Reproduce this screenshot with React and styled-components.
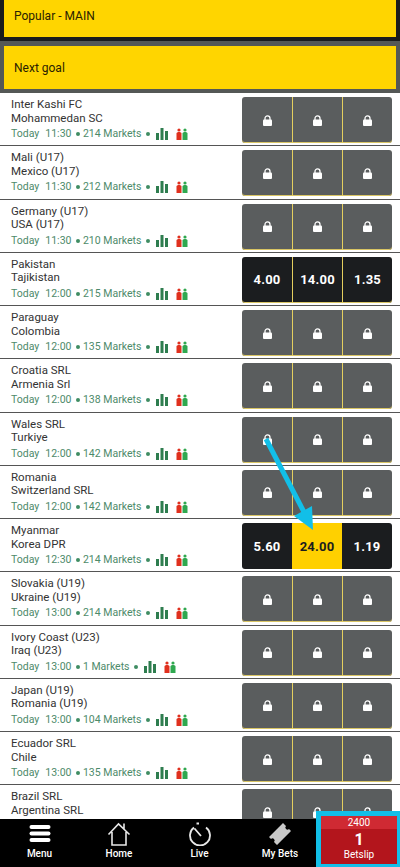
import React from "react";
import styled, { createGlobalStyle } from "styled-components";

const GlobalStyle = createGlobalStyle`
   html, body {
      margin: 0;
      padding: 0;
      background: #fff;
      font-family: Roboto, "Liberation Sans", sans-serif;
      overflow: hidden;
   }
`;

const Page = styled.div`
   position: relative;
   width: 400px;
   height: 867px;
   overflow: hidden;
`;

const TopPanel = styled.div`
   background: #1a1c1c;
   padding: 0 4px 4px;
`;

const MarketPanel = styled.div`
   background: #545856;
   padding: 5px 4px 4px;
`;

const Banner = styled.div`
   display: flex;
   align-items: center;
   box-sizing: border-box;
   height: ${(p) => p.$height}px;
   padding: 0 0 ${(p) => p.$lift || 0}px 10px;
   background: #ffd500;
   color: #2a2200;
   font-size: 12px;
`;

const Row = styled.div`
   display: flex;
   box-sizing: border-box;
   height: 53.25px;
   padding: 4px 8px 0 11px;
   background: #fff;
   border-bottom: 1px solid #555;
`;

const Info = styled.div`
   flex: 1;
   min-width: 0;
   padding-top: 1px;
`;

const Team = styled.div`
   font-size: 11.5px;
   line-height: 13.5px;
   color: #333;
`;

const Meta = styled.div`
   display: flex;
   align-items: center;
   margin-top: 2px;
   font-size: 10.5px;
   line-height: 14px;
   color: #4d8a6a;
   white-space: nowrap;
`;

const Time = styled.span`
   margin-left: 6px;
`;

const Dot = styled.span`
   width: 4px;
   height: 4px;
   margin: 0 3px 0 4.5px;
   border-radius: 50%;
   background: #3f8d63;
`;

const IconSlot = styled.svg`
   width: 12px;
   height: 12px;
   margin-left: ${(p) => p.$gap}px;
`;

const Odds = styled.div`
   display: flex;
   flex: none;
   width: 150px;
   height: 46px;
   border-radius: 3px;
   overflow: hidden;
   background: ${(p) => (p.$open ? "#1b1d1f" : "#5a5d5e")};
   box-shadow: ${(p) => (p.$plain ? "none" : "inset 0 -1px 0 #d9c564")};
`;

const Cell = styled.div`
   display: flex;
   align-items: center;
   justify-content: center;
   width: ${(p) => p.$width}px;
   box-sizing: border-box;
   font-size: 13px;
   font-weight: 700;
   letter-spacing: 0.2px;
   color: ${(p) => (p.$selected ? "#1b1d1f" : "#fff")};
   background: ${(p) => (p.$selected ? "#ffd000" : "transparent")};
   border-left: ${(p) => (p.$line ? "1px solid #e4cf5f" : "none")};
`;

const LockIcon = styled.svg`
   width: 9px;
   height: 11px;
`;

const Footer = styled.div`
   position: absolute;
   left: 0;
   right: 0;
   bottom: 0;
   display: flex;
   height: 48px;
   background: #000;
`;

const NavItem = styled.div`
   display: flex;
   flex-direction: column;
   align-items: center;
   justify-content: flex-end;
   width: ${(p) => p.$width}px;
   padding-bottom: 8px;
   box-sizing: border-box;
   color: #fff;
   font-size: 10px;
   font-weight: 500;
   line-height: 11px;
`;

const NavIcon = styled.svg`
   width: 24px;
   height: 24px;
   margin-bottom: 2px;
`;

const Betslip = styled.div`
   position: absolute;
   right: 0;
   bottom: 0;
   display: flex;
   flex-direction: column;
   box-sizing: border-box;
   width: 84px;
   height: 56px;
   border: 5px solid #12bfe8;
   border-bottom-width: 3px;
   border-right-width: 3px;
   background: #b3151c;
   color: #fff;
   text-align: center;
`;

const SlipTop = styled.div`
   height: 13px;
   background: #cf2a33;
   font-size: 10px;
   line-height: 13px;
`;

const SlipCount = styled.div`
   font-size: 16px;
   font-weight: 700;
   line-height: 19px;
   margin-top: 1px;
`;

const SlipLabel = styled.div`
   font-size: 10px;
   line-height: 11px;
`;

const Arrow = styled.svg`
   position: absolute;
   left: 255px;
   top: 430px;
   width: 70px;
   height: 105px;
`;

const matches = [
   ["Inter Kashi FC", "Mohammedan SC", "11:30", 214],
   ["Mali (U17)", "Mexico (U17)", "11:30", 212],
   ["Germany (U17)", "USA (U17)", "11:30", 210],
   ["Pakistan", "Tajikistan", "12:00", 215, ["4.00", "14.00", "1.35"]],
   ["Paraguay", "Colombia", "12:00", 135],
   ["Croatia SRL", "Armenia Srl", "12:00", 138],
   ["Wales SRL", "Turkiye", "12:00", 142],
   ["Romania", "Switzerland SRL", "12:00", 142],
   ["Myanmar", "Korea DPR", "12:30", 214, ["5.60", "24.00", "1.19"], 1],
   ["Slovakia (U19)", "Ukraine (U19)", "13:00", 214],
   ["Ivory Coast (U23)", "Iraq (U23)", "13:00", 1],
   ["Japan (U19)", "Romania (U19)", "13:00", 104],
   ["Ecuador SRL", "Chile", "13:00", 135],
   ["Brazil SRL", "Argentina SRL", "13:00", 135],
];

const cellWidths = [50, 50, 50];

const Padlock = () => (
   <LockIcon viewBox="0 0 9 11">
      <path d="M2 5 V3.4 a2.5 2.5 0 0 1 5 0 V5" fill="none" stroke="#fff" strokeWidth="1.3" />
      <rect x="0" y="4.6" width="9" height="6.4" rx="1" fill="#fff" />
   </LockIcon>
);

const BarsIcon = () => (
   <IconSlot $gap={3} viewBox="0 0 12 12">
      <g fill="#2e7d4f">
         <rect x="0" y="5" width="3" height="7" />
         <rect x="4.5" y="0" width="3" height="12" />
         <rect x="9" y="3" width="3" height="9" />
      </g>
   </IconSlot>
);

const PlayersIcon = () => (
   <IconSlot $gap={8} viewBox="0 0 12 12">
      <g fill="#e0301e">
         <circle cx="3" cy="2" r="1.6" />
         <path d="M0.5 12 V5 L2 4 H4 L5.5 5 V12 Z" />
      </g>
      <g fill="#2fa84f">
         <circle cx="9" cy="2" r="1.6" />
         <path d="M6.5 12 V5 L8 4 H10 L11.5 5 V12 Z" />
      </g>
   </IconSlot>
);

const Match = ({ home, away, time, markets, odds, selected }) => (
   <Row>
      <Info>
         <Team>{home}</Team>
         <Team>{away}</Team>
         <Meta>
            Today<Time>{time}</Time>
            <Dot />
            {markets} Markets
            <Dot />
            <BarsIcon />
            <PlayersIcon />
         </Meta>
      </Info>
      <Odds $open={!!odds} $plain={selected !== undefined}>
         {cellWidths.map((width, i) => (
            <Cell
               key={i}
               $width={width}
               $line={selected === undefined && i > 0}
               $selected={selected === i}
            >
               {odds ? odds[i] : <Padlock />}
            </Cell>
         ))}
      </Odds>
   </Row>
);

const App = () => (
   <Page>
      <GlobalStyle />
      <TopPanel>
         <Banner $height={37} $lift={5}>Popular - MAIN</Banner>
      </TopPanel>
      <MarketPanel>
         <Banner $height={43}>Next goal</Banner>
      </MarketPanel>
      {matches.map(([home, away, time, markets, odds, selected]) => (
         <Match
            key={home}
            home={home}
            away={away}
            time={time}
            markets={markets}
            odds={odds}
            selected={selected}
         />
      ))}

      <Arrow viewBox="0 0 70 105">
         <path d="M11 9 L50 84" stroke="#12bfe8" strokeWidth="5" />
         <path d="M58 100 L39 86 L57 76 Z" fill="#12bfe8" />
      </Arrow>

      <Footer>
         <NavItem $width={79}>
            <NavIcon viewBox="0 0 24 24">
               <g fill="#fff">
                  <rect x="1.5" y="3" width="21" height="4" rx="2" />
                  <rect x="1.5" y="9.5" width="21" height="4" rx="2" />
                  <rect x="1.5" y="16" width="21" height="4" rx="2" />
               </g>
            </NavIcon>
            Menu
         </NavItem>
         <NavItem $width={80}>
            <NavIcon viewBox="0 0 24 24" fill="none" stroke="#e8e8e8" strokeWidth="1.6">
               <path d="M1.5 12.5 L11.5 2 L22.5 12.5 M5 10 V23 H19 V10 M17 1.5 V7" />
            </NavIcon>
            Home
         </NavItem>
         <NavItem $width={81}>
            <NavIcon viewBox="0 0 24 24" fill="none" stroke="#e8e8e8" strokeWidth="1.8">
               <path d="M6 5.5 A10 10 0 1 0 18 5.5 M8.5 1.5 H11 M6.5 6.5 L13 14" />
            </NavIcon>
            Live
         </NavItem>
         <NavItem $width={80}>
            <NavIcon viewBox="0 0 24 24">
               <path
                  fill="#c9c9c9"
                  d="M1 15 L15 1 L18 4 A2 2 0 0 0 21 7 L23 9 L9 23 L6 20 A2 2 0 0 0 3 17 Z"
               />
            </NavIcon>
            My Bets
         </NavItem>
      </Footer>

      <Betslip>
         <SlipTop>2400</SlipTop>
         <SlipCount>1</SlipCount>
         <SlipLabel>Betslip</SlipLabel>
      </Betslip>
   </Page>
);

export default App;
